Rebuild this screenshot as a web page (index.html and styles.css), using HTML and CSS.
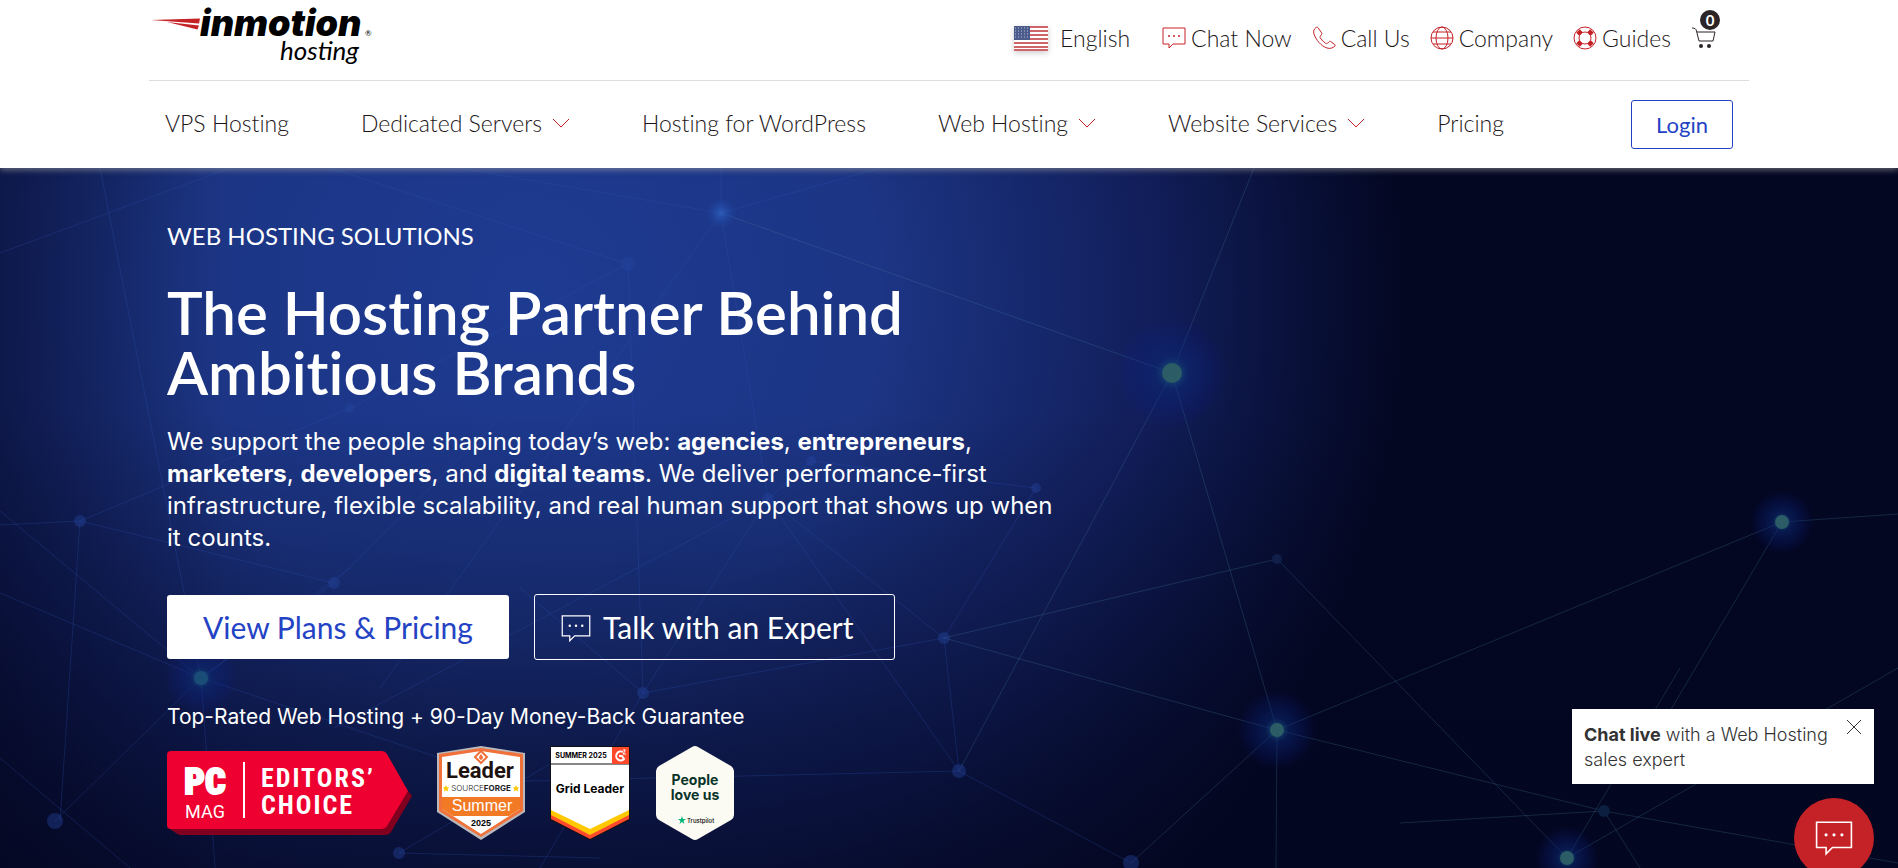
FILE: index.html
```
<!DOCTYPE html>
<html lang="en">
<head>
    <meta charset="UTF-8">
    <meta name="viewport" content="width=device-width, initial-scale=1.0">
    <title>InMotion Hosting</title>
    <link rel="stylesheet" href="styles.css">
</head>
<body>
    <header class="site-header">
        <div class="container">
            <div class="top-bar">
                <a href="/" class="logo" aria-label="InMotion Hosting">
                    <svg width="240" height="76" viewBox="0 -8 240 76">
                        <path d="M0 12 L49 10.500 L48 15.500 Z" fill="#c52227"/>
                        <path d="M16 14 L48 17.500 L46.500 21.500 Z" fill="#c52227"/>
                        <text x="49" y="28" class="logo-main">inmotion</text>
                        <text x="129" y="52" class="logo-sub">hosting</text>
                        <text x="214" y="28" class="logo-reg">®</text>
                    </svg>
                </a>
                <div class="top-links">
                    <a href="#language" class="language">
                        <svg class="flag" width="34" height="25" viewBox="0 0 34 25">
                            <rect width="34" height="25" fill="#fff"/>
                            <path d="M0 1h34M0 5h34M0 9h34M0 13h34M0 17h34M0 21h34M0 24h34" stroke="#d0646b" stroke-width="2"/>
                            <rect width="16" height="14" fill="#4a5b8c"/>
                            <path d="M1 2h15M1 5h15M1 8h15M1 11h15" stroke="#b6bed4" stroke-dasharray="1 2"/>
                        </svg>
                        English
                    </a>
                    <a href="#chat">
                        <svg class="icon" width="24" height="24" viewBox="0 0 24 24"><path d="M1 2h22v16H11l-4 4v-4H1z"/><path d="M7 10h0M12 10h0M17 10h0" class="dots"/></svg>
                        Chat Now
                    </a>
                    <a href="#call">
                        <svg class="icon" width="24" height="24" viewBox="0 0 24 24"><path d="M4 1.500C2 3 1 5 2 8c2 6 7 12 13 14 3 1 6 0 8-2 .4-.5.3-1-.2-1.400l-4-3c-.6-.5-1.200-.4-1.700.1l-1.500 1.500c-.6.6-1.400.5-2 .1-2-1.300-3.800-3.100-5.200-5.200-.5-.8-.5-1.400 0-2L9.500 8.500c.5-.5.5-1 .1-1.700L6 1.700c-.5-.7-1.300-.7-2-.2z"/></svg>
                        Call Us
                    </a>
                    <a href="#company">
                        <svg class="icon" width="24" height="24" viewBox="0 0 24 24"><circle cx="12" cy="12" r="11"/><ellipse cx="12" cy="12" rx="6" ry="11"/><path d="M1 12h22M3 6h18M3 18h18"/></svg>
                        Company
                    </a>
                    <a href="#guides">
                        <svg class="icon" width="24" height="24" viewBox="0 0 24 24"><circle cx="12" cy="12" r="11"/><circle cx="12" cy="12" r="6"/><path d="M5 5l3 3M19 5l-3 3M5 19l3-3M19 19l-3-3" class="ring"/></svg>
                        Guides
                    </a>
                    <a href="#cart" class="cart" aria-label="Cart, 0 items">
                        <svg width="26" height="24" viewBox="0 0 26 24"><path d="M1 2c3 0 4 1 4.500 3L8 15h14l2-9H6" fill="none" stroke="#2b2326"/><circle cx="10" cy="20" r="2" fill="#2b2326"/><circle cx="18" cy="20" r="2" fill="#2b2326"/></svg>
                        <span class="cart-count">0</span>
                    </a>
                </div>
            </div>
            <nav class="main-nav">
                <div class="nav-links">
                    <a href="#vps">VPS Hosting</a>
                    <a href="#dedicated">Dedicated Servers <svg class="chevron" width="18" height="10" viewBox="0 0 18 10"><path d="M1 1l8 8 8-8"/></svg></a>
                    <a href="#wordpress">Hosting for WordPress</a>
                    <a href="#web">Web Hosting <svg class="chevron" width="18" height="10" viewBox="0 0 18 10"><path d="M1 1l8 8 8-8"/></svg></a>
                    <a href="#services">Website Services <svg class="chevron" width="18" height="10" viewBox="0 0 18 10"><path d="M1 1l8 8 8-8"/></svg></a>
                    <a href="#pricing">Pricing</a>
                </div>
                <a href="#login" class="login">Login</a>
            </nav>
        </div>
    </header>

    <main class="hero">
        <svg class="network" viewBox="0 0 1898 700" preserveAspectRatio="xMidYMid slice" aria-hidden="true">
            <defs>
                <radialGradient id="glow-green">
                    <stop offset="0" stop-color="#1f6a80" stop-opacity="0.900"/>
                    <stop offset="0.300" stop-color="#0c2a78" stop-opacity="0.500"/>
                    <stop offset="1" stop-color="#0b1a90" stop-opacity="0"/>
                </radialGradient>
                <radialGradient id="glow-blue">
                    <stop offset="0" stop-color="#2c5cb8"/>
                    <stop offset="1" stop-color="#1c3f9c" stop-opacity="0"/>
                </radialGradient>
            </defs>
            <g class="lines-left">
                <path d="M721 45L400 -10M721 45L880 0M721 45L721 0M721 45L380 520M721 45L768 331M628 96L330 0M628 96L643 525M628 96L350 240M768 331L944 470M768 331L959 603M768 331L334 560M768 331L643 525M768 331L811 293L1036 320M1036 320L944 470M80 353L0 357M80 353L350 240M80 353L60 653M100 0L201 510M334 415L201 510M334 415L500 250M643 525L944 470M643 525L540 700M643 525L520 420"/>
                <path d="M201 510L0 343M201 510L0 425M201 510L440 590M201 510L215 700M201 510L55 653M201 510L350 400M0 590L130 700M0 85L230 0M959 603L440 615M959 603L944 470M959 603L1131 695M399 685L560 590M399 685L600 690M80 353L334 415"/>
            </g>
            <g class="lines-right">
                <path d="M721 45L1172 205L1254 0M1172 205L1277 562M1172 205L959 603M1277 562L1782 354L1898 346M1782 354L1660 560M1277 562L1604 643M1277 562L1131 695M1277 562L944 470M1277 562L1276 700M1277 391L1567 690M1277 391L944 470M1604 643L1400 655M1604 643L1640 700M1604 643L1898 695M1567 690L1680 500M1567 690L1898 500"/>
            </g>
            <g fill="url(#glow-green)">
                <circle cx="1172" cy="205" r="56"/>
                <circle cx="1782" cy="354" r="32"/>
                <circle cx="1277" cy="562" r="40"/>
                <circle cx="1567" cy="690" r="32"/>
                <circle cx="201" cy="510" r="36"/>
            </g>
            <circle cx="721" cy="45" r="16" fill="url(#glow-blue)"/>
            <g fill="#2c5c65">
                <circle cx="1172" cy="205" r="10"/>
                <circle cx="1782" cy="354" r="7"/>
                <circle cx="1277" cy="562" r="7"/>
                <circle cx="1567" cy="690" r="7"/>
            </g>
            <circle cx="201" cy="510" r="7" fill="#1a4c78"/>
            <g fill="#25479f" fill-opacity="0.400">
                <circle cx="628" cy="96" r="7"/>
                <circle cx="768" cy="331" r="6"/>
                <circle cx="811" cy="293" r="5"/>
                <circle cx="1036" cy="320" r="5"/>
                <circle cx="80" cy="353" r="6"/>
                <circle cx="334" cy="415" r="6"/>
                <circle cx="643" cy="525" r="6"/>
                <circle cx="944" cy="470" r="6"/>
                <circle cx="959" cy="603" r="7"/>
                <circle cx="350" cy="240" r="5"/>
                <circle cx="55" cy="653" r="8"/>
                <circle cx="399" cy="685" r="6"/>
                <circle cx="1131" cy="695" r="8"/>
            </g>
            <circle cx="1277" cy="391" r="5" fill="#101e4a"/>
            <circle cx="1604" cy="643" r="6" fill="#0c1f40"/>
        </svg>

        <div class="container hero-content">
            <p class="eyebrow">WEB HOSTING SOLUTIONS</p>
            <h1>The Hosting Partner Behind<br>Ambitious Brands</h1>
            <p class="intro">We support the people shaping today’s web: <strong>agencies</strong>, <strong>entrepreneurs</strong>,<br><strong>marketers</strong>, <strong>developers</strong>, and <strong>digital teams</strong>. We deliver performance-first<br>infrastructure, flexible scalability, and real human support that shows up when<br>it counts.</p>
            <div class="buttons">
                <a href="#plans" class="btn btn-white">View Plans &amp; Pricing</a>
                <a href="#expert" class="btn btn-outline">
                    <svg width="30" height="30" viewBox="0 0 24 24" fill="none" stroke="#fff"><path d="M1 3h22v16H11l-4 4v-4H1z"/><path d="M7 11h0M12 11h0M17 11h0" class="dots"/></svg>
                    Talk with an Expert
                </a>
            </div>
            <p class="guarantee">Top-Rated Web Hosting + 90-Day Money-Back Guarantee</p>
            <div class="badges">
                <svg class="pcmag" width="245" height="84" viewBox="0 0 245 84">
                    <path d="M0 76L9 82Q11 84 14 84H218Q222 84 224 81L245 45L241 40Z" fill="#82001f"/>
                    <path d="M4 0H215Q218 0 220 3L241 40L220 75Q218 78 215 78H4Q0 78 0 74V4Q0 0 4 0Z" fill="#ee0030"/>
                    <text x="38" y="43" class="pc">PC</text>
                    <text x="38" y="67" class="mag">MAG</text>
                    <path d="M77 11V67" stroke="#fff" stroke-width="2"/>
                    <text x="94" y="36" class="choice">EDITORS’</text>
                    <text x="94" y="63" class="choice">CHOICE</text>
                </svg>
                <svg width="88" height="94" viewBox="0 0 88 94">
                    <path d="M44 0L88 7V66L44 94L0 66V7Z" fill="#b9b9bd"/>
                    <path d="M44 2L86 8V65L44 91L2 65V8Z" fill="#f0713a"/>
                    <path d="M44 5L83 11V63L44 88L5 63V11Z" fill="#fff"/>
                    <path d="M5 51H83V63L72 70H16L5 63Z" fill="#f27a24"/>
                    <path d="M44 5L50 11L44 17L38 11Z" fill="#fff" stroke="#f0713a" stroke-width="2"/>
                    <path d="M44 8Q48 12 44 14Q40 12 44 8Z" fill="#f0713a"/>
                    <text x="43" y="32" class="sf-leader">Leader</text>
                    <text x="44" y="45" class="sf-name">SOURCE<tspan font-weight="700">FORGE</tspan></text>
                    <path id="star" d="M9 39l1 2.200 2.400.2-1.800 1.600.6 2.400L9 44.200l-2.200 1.200.6-2.400-1.800-1.600 2.400-.2z" fill="#fcc800"/>
                    <use href="#star" x="70"/>
                    <text x="45" y="65" class="sf-season">Summer</text>
                    <text x="44" y="80" class="sf-year">2025</text>
                </svg>
                <svg width="80" height="94" viewBox="0 0 80 94">
                    <path d="M0 0H80V74L40 94L0 74Z" fill="#101116"/>
                    <path d="M1 64L40 84L79 64V73L40 93L1 73Z" fill="#ff492c"/>
                    <path d="M1 50H79V69L40 89L1 69Z" fill="#ffc800"/>
                    <path d="M1 1H79V64L40 83L1 64Z" fill="#fff"/>
                    <path d="M1 18H79" stroke="#101116"/>
                    <rect x="62" y="1" width="17" height="17" fill="#ff492c"/>
                    <path d="M73 6A4.500 4.500 0 1 0 74 13L72 10H69" fill="none" stroke="#fff" stroke-width="2"/>
                    <path d="M73 4q3-1 2 1l-2 3h3" fill="none" stroke="#fff"/>
                    <text x="31" y="12" class="g2-season">SUMMER 2025</text>
                    <text x="40" y="47" class="g2-title">Grid Leader</text>
                </svg>
                <svg width="80" height="94" viewBox="0 0 80 94">
                    <path d="M37 1Q40 -1 43 1L76 20Q79 22 79 25V69Q79 72 76 74L43 93Q40 95 37 93L4 74Q1 72 1 69V25Q1 22 4 20Z" fill="#fcfbf3"/>
                    <text x="40" y="39" class="tp-title">People</text>
                    <text x="40" y="54" class="tp-title">love us</text>
                    <path d="M27 70l1 3h3l-2.500 2 1 3-2.500-2-2.500 2 1-3-2.500-2h3z" fill="#00b67a"/>
                    <text x="32" y="77" class="tp-name">Trustpilot</text>
                </svg>
            </div>
        </div>
    </main>

    <div class="chat-widget">
        <div class="chat-box">
            <p><strong>Chat live</strong> with a Web Hosting<br>sales expert</p>
            <button type="button" class="chat-close" aria-label="Close"><svg width="16" height="16" viewBox="0 0 16 16"><path d="M1 1l14 14M15 1L1 15" stroke="#333"/></svg></button>
        </div>
        <button type="button" class="chat-button" aria-label="Open chat">
            <svg width="38" height="38" viewBox="0 0 24 24" fill="none" stroke="#fff"><path d="M1 2h22v16H11l-4 4v-4H1z"/><path d="M7 10h0M12 10h0M17 10h0" class="dots"/></svg>
        </button>
    </div>
</body>
</html>
```
FILE: styles.css
```
* {
    box-sizing: border-box;
}

body {
    margin: 0;
    min-height: 100vh;
    display: flex;
    flex-direction: column;
    font-family: Lato, sans-serif;
    font-variant-ligatures: none;
    color: #1c1618;
}

a {
    color: inherit;
    text-decoration: none;
}

p,
h1 {
    margin: 0;
}

.container {
    width: 100%;
    max-width: 1600px;
    margin: 0 auto;
}

/* Header */
.site-header {
    background-color: white;
    height: 168px;
    position: relative;
    z-index: 2;
    box-shadow: 0 2px 6px rgba(160, 160, 160, 0.6);
}

.top-bar {
    display: flex;
    justify-content: space-between;
    height: 81px;
    padding: 0 32px 0 2px;
    border-bottom: 1px solid #ddd;
}

.logo-main {
    font: italic 900 36px Inter, sans-serif;
}

.logo-sub {
    font: italic 400 26px Lato, sans-serif;
}

.logo-reg {
    font: 8px Lato, sans-serif;
}

.top-links {
    display: flex;
    align-items: center;
    gap: 20px;
    height: 76px;
    font-size: 23px;
    font-weight: 300;
}

.top-links a {
    display: flex;
    align-items: center;
    gap: 5px;
}

.top-links .language {
    gap: 12px;
    margin-right: 12px;
}

.flag {
    box-shadow: 0 2px 6px rgba(0, 0, 0, 0.2);
}

.icon {
    fill: none;
    stroke: #c52227;
}

.dots {
    stroke-width: 2;
    stroke-linecap: round;
}

.ring {
    stroke-width: 5;
}

.cart {
    position: relative;
}

.cart-count {
    position: absolute;
    top: -16px;
    right: -3px;
    width: 20px;
    height: 20px;
    border-radius: 50%;
    background-color: #2b2326;
    color: white;
    font-size: 15px;
    font-weight: 700;
    line-height: 20px;
    text-align: center;
}

.main-nav {
    display: flex;
    justify-content: space-between;
    align-items: center;
    height: 87px;
    padding: 0 16px;
    font-size: 23px;
    font-weight: 300;
}

.nav-links {
    display: flex;
    gap: 72px;
    margin-bottom: 4px;
}

.nav-links a {
    display: flex;
    align-items: center;
    gap: 10px;
}

.chevron {
    fill: none;
    stroke: #c52227;
}

.login {
    padding: 10px 24px;
    border: 1px solid #2443c4;
    border-radius: 3px;
    color: #2443c4;
    font-size: 22px;
    font-weight: 400;
}

/* Hero */
.hero {
    flex: 1;
    position: relative;
    overflow: hidden;
    padding: 50px 0 28px;
    color: white;
    background-color: #030722;
    background-image:
        linear-gradient(90deg, rgba(3, 6, 31, 0.4), transparent 12%),
        linear-gradient(180deg, transparent 35%, rgba(3, 6, 31, 0.65)),
        radial-gradient(ellipse 46% 125% at 28% 18%, #1e3b92 0%, #1c3584 40%, #121f5c 70%, rgba(3, 7, 34, 0) 100%);
}

.network {
    position: absolute;
    inset: 0;
    width: 100%;
    height: 100%;
}

.lines-left {
    fill: none;
    stroke: #2f59bd;
    stroke-opacity: 0.25;
}

.lines-right {
    fill: none;
    stroke: #4d86a8;
    stroke-opacity: 0.25;
}

.hero-content {
    position: relative;
    padding: 0 18px;
}

.eyebrow {
    font-size: 24px;
    line-height: 36px;
    margin-bottom: 28px;
}

h1 {
    font-size: 60px;
    line-height: 60px;
    font-weight: 600;
    margin-bottom: 24px;
}

.intro {
    font-family: Inter, sans-serif;
    font-size: 24px;
    line-height: 32px;
    margin-bottom: 40px;
}

.buttons {
    display: flex;
    align-items: center;
    gap: 25px;
    margin-bottom: 44px;
}

.btn {
    display: flex;
    align-items: center;
    gap: 12px;
    font-size: 30px;
    height: 64px;
    border-radius: 3px;
}

.btn-white {
    justify-content: center;
    width: 342px;
    background-color: white;
    color: #2443c4;
}

.btn-outline {
    width: 361px;
    height: 66px;
    padding-left: 26px;
    border: 1px solid white;
}

.guarantee {
    font-family: Inter, sans-serif;
    font-size: 21px;
    line-height: 26px;
    margin-bottom: 16px;
}

.badges {
    display: flex;
    align-items: center;
    gap: 25px;
}

.badges text {
    font-family: Lato, sans-serif;
    text-anchor: middle;
}

.badges .pc {
    font: 900 36px "Roboto Condensed", "Liberation Sans Narrow", Roboto, sans-serif;
    fill: white;
    stroke: white;
    stroke-width: 2;
}

.badges .mag {
    font: 400 18px Roboto, sans-serif;
    fill: white;
}

.badges .choice {
    font: 700 26px "Roboto Condensed", "Liberation Sans Narrow", Roboto, sans-serif;
    letter-spacing: 2px;
    text-anchor: start;
    fill: white;
}

.badges .sf-leader {
    font: 700 22px Roboto, sans-serif;
    fill: #1e1210;
}

.badges .sf-name {
    font: 300 8px Inter, sans-serif;
    fill: #222;
}

.badges .sf-season {
    font: 400 16px "Liberation Sans", sans-serif;
    fill: white;
}

.badges .sf-year {
    font: 700 9px "Liberation Sans", sans-serif;
}

.badges .g2-season {
    font: 700 7px Inter, sans-serif;
}

.badges .g2-title {
    font: 700 12px Inter, sans-serif;
}

.badges .tp-title {
    font: 700 14px Inter, sans-serif;
    fill: #0a3329;
}

.badges .tp-name {
    font: 500 6px Inter, sans-serif;
    text-anchor: start;
}

/* Chat */
.chat-widget {
    position: fixed;
    right: 24px;
    bottom: -10px;
    z-index: 3;
    display: flex;
    flex-direction: column;
    align-items: flex-end;
    gap: 14px;
}

.chat-box {
    display: flex;
    width: 302px;
    padding: 10px 12px 12px;
    gap: 4px;
    background-color: white;
    color: #333;
    font: 300 18px Inter, sans-serif;
    line-height: 25px;
}

.chat-box p {
    flex: 1;
    padding-top: 3px;
    white-space: nowrap;
}

.chat-box strong {
    font-weight: 700;
}

.chat-close {
    align-self: flex-start;
    display: flex;
    padding: 0;
    border: none;
    background: none;
    cursor: pointer;
}

.chat-button {
    display: flex;
    align-items: center;
    justify-content: center;
    width: 80px;
    height: 80px;
    border: none;
    border-radius: 50%;
    background-color: #c52227;
    cursor: pointer;
}
```
